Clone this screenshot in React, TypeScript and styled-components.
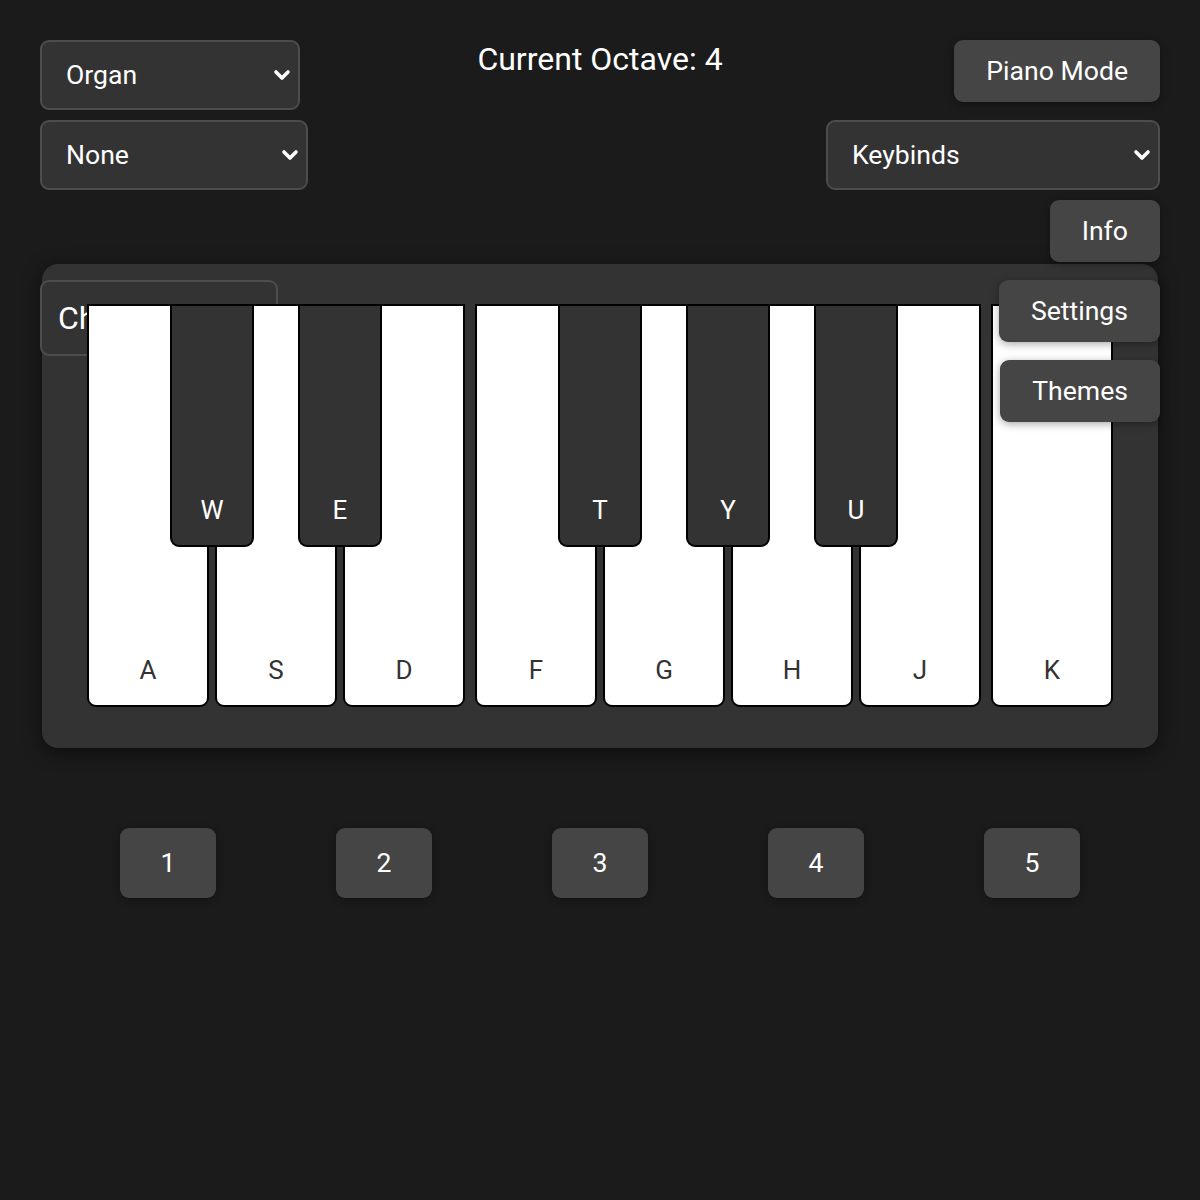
import React from "react";
import styled, { createGlobalStyle } from "styled-components";

const GlobalStyle = createGlobalStyle`
  html, body { margin: 0; padding: 0; background: #1b1b1b; }
  body { font-family: Roboto, "Liberation Sans", Arial, sans-serif; color: #fff; }
  * { box-sizing: border-box; }
`;

const Page = styled.div`
  min-height: 1200px;
  padding: 40px 40px 0;
  background: #1b1b1b;
`;

const Header = styled.header`
  display: grid;
  grid-template-columns: 1fr auto 1fr;
  align-items: start;
  height: 224px;
`;

const LeftCol = styled.div`
  position: relative;
  z-index: 1;
  display: flex;
  flex-direction: column;
  align-items: flex-start;
  justify-self: start;
`;

const RightCol = styled.div`
  position: relative;
  z-index: 3;
  display: flex;
  flex-direction: column;
  align-items: flex-end;
  justify-self: end;
`;

const Title = styled.h1`
  margin: 0;
  font-size: 32px;
  font-weight: 400;
  line-height: 38px;
  color: #fff;
`;

const SelectWrap = styled.div<{ $w: number; $h: number; $mt?: number; $mb?: number }>`
  position: relative;
  width: ${(p) => p.$w}px;
  height: ${(p) => p.$h}px;
  margin-top: ${(p) => p.$mt ?? 0}px;
  margin-bottom: ${(p) => p.$mb ?? 0}px;
`;

const Select = styled.select<{ $fs: number; $pl: number; $pb: number }>`
  appearance: none;
  -webkit-appearance: none;
  width: 100%;
  height: 100%;
  padding: 0 36px ${(p) => p.$pb}px ${(p) => p.$pl}px;
  background: #333;
  color: #fff;
  border: 2px solid #4d4d4d;
  border-radius: 9px;
  font-family: Roboto, "Liberation Sans", Arial, sans-serif;
  font-size: ${(p) => p.$fs}px;
  outline: none;
`;

const Chevron = styled.svg`
  position: absolute;
  right: 8px;
  top: 50%;
  transform: translateY(-50%);
  pointer-events: none;
`;

const Button = styled.button<{ $mb?: number }>`
  height: 62px;
  padding: 0 32px 2px;
  margin-bottom: ${(p) => p.$mb ?? 0}px;
  background: #454545;
  color: #fff;
  border: none;
  border-radius: 9px;
  font-family: Roboto, "Liberation Sans", Arial, sans-serif;
  font-size: 26.6px;
  box-shadow: 0 2px 8px rgba(0, 0, 0, 0.35);
  cursor: pointer;
`;

const Panel = styled.section`
  position: relative;
  margin: 0 2px;
  height: 484px;
  padding-top: 40px;
  background: #333;
  border-radius: 16px;
  box-shadow: 0 4px 18px rgba(0, 0, 0, 0.55);
  display: flex;
  justify-content: center;
  align-items: flex-start;
`;

const Keys = styled.div`
  position: relative;
  z-index: 2;
  display: flex;
  gap: 6px;
`;

const WhiteKey = styled.div<{ $extra?: boolean }>`
  position: relative;
  width: 122px;
  height: 403px;
  margin-right: ${(p) => (p.$extra ? 4 : 0)}px;
  background: #fff;
  border: 2px solid #000;
  border-radius: 0 0 9px 9px;
  display: flex;
  align-items: flex-end;
  justify-content: center;
  padding-bottom: 20px;
`;

const BlackKey = styled.div`
  position: absolute;
  z-index: 1;
  top: -2px;
  right: -47px;
  width: 84px;
  height: 243px;
  background: #333;
  border: 2px solid #000;
  border-radius: 0 0 9px 9px;
  display: flex;
  align-items: flex-end;
  justify-content: center;
  padding-bottom: 20px;
`;

const KeyLabel = styled.span<{ $dark?: boolean }>`
  font-size: 26px;
  line-height: 30px;
  color: ${(p) => (p.$dark ? "#fff" : "#333")};
`;

const NumberRow = styled.div`
  display: flex;
  justify-content: center;
  gap: 120px;
  margin-top: 80px;
`;

const NumButton = styled.button`
  width: 96px;
  height: 70px;
  padding: 0 0 2px;
  background: #454545;
  color: #fff;
  border: none;
  border-radius: 9px;
  font-family: Roboto, "Liberation Sans", Arial, sans-serif;
  font-size: 26.6px;
  box-shadow: 0 2px 8px rgba(0, 0, 0, 0.3);
`;

const ChevronIcon = () => (
  <Chevron width="20" height="14" viewBox="0 0 20 14">
    <path d="M4 4 L10 10 L16 4" fill="none" stroke="#fff" strokeWidth="3.6" strokeLinecap="round" strokeLinejoin="round" />
  </Chevron>
);

type SelProps = {
  w: number;
  h: number;
  fs?: number;
  pl?: number;
  pb?: number;
  mt?: number;
  mb?: number;
  options: string[];
};

const Dropdown = ({ w, h, fs = 26.6, pl = 24, pb = 2, mt, mb, options }: SelProps) => (
  <SelectWrap $w={w} $h={h} $mt={mt} $mb={mb}>
    <Select $fs={fs} $pl={pl} $pb={pb} defaultValue={options[0]}>
      {options.map((o) => (
        <option key={o}>{o}</option>
      ))}
    </Select>
    <ChevronIcon />
  </SelectWrap>
);

const whiteKeys: { k: string; black?: string; extra?: boolean }[] = [
  { k: "A", black: "W" },
  { k: "S", black: "E" },
  { k: "D", extra: true },
  { k: "F", black: "T" },
  { k: "G", black: "Y" },
  { k: "H", black: "U" },
  { k: "J", extra: true },
  { k: "K" },
];

export default function App() {
  return (
    <>
      <GlobalStyle />
      <Page>
        <Header>
          <LeftCol>
            <Dropdown w={260} h={70} mb={10} options={["Organ", "Piano", "Synth"]} />
            <Dropdown w={268} h={70} options={["None", "Reverb", "Delay"]} />
            <Dropdown w={238} h={76} mt={90} fs={32} pl={16} pb={0} options={["Chords", "Notes"]} />
          </LeftCol>
          <Title>Current Octave: 4</Title>
          <RightCol>
            <Button $mb={18}>Piano Mode</Button>
            <Dropdown w={334} h={70} mb={10} options={["Keybinds", "Custom"]} />
            <Button $mb={18}>Info</Button>
            <Button $mb={18}>Settings</Button>
            <Button>Themes</Button>
          </RightCol>
        </Header>
        <Panel>
          <Keys>
            {whiteKeys.map((wk) => (
              <WhiteKey key={wk.k} $extra={wk.extra}>
                <KeyLabel>{wk.k}</KeyLabel>
                {wk.black && (
                  <BlackKey>
                    <KeyLabel $dark>{wk.black}</KeyLabel>
                  </BlackKey>
                )}
              </WhiteKey>
            ))}
          </Keys>
        </Panel>
        <NumberRow>
          {[1, 2, 3, 4, 5].map((n) => (
            <NumButton key={n}>{n}</NumButton>
          ))}
        </NumberRow>
      </Page>
    </>
  );
}
